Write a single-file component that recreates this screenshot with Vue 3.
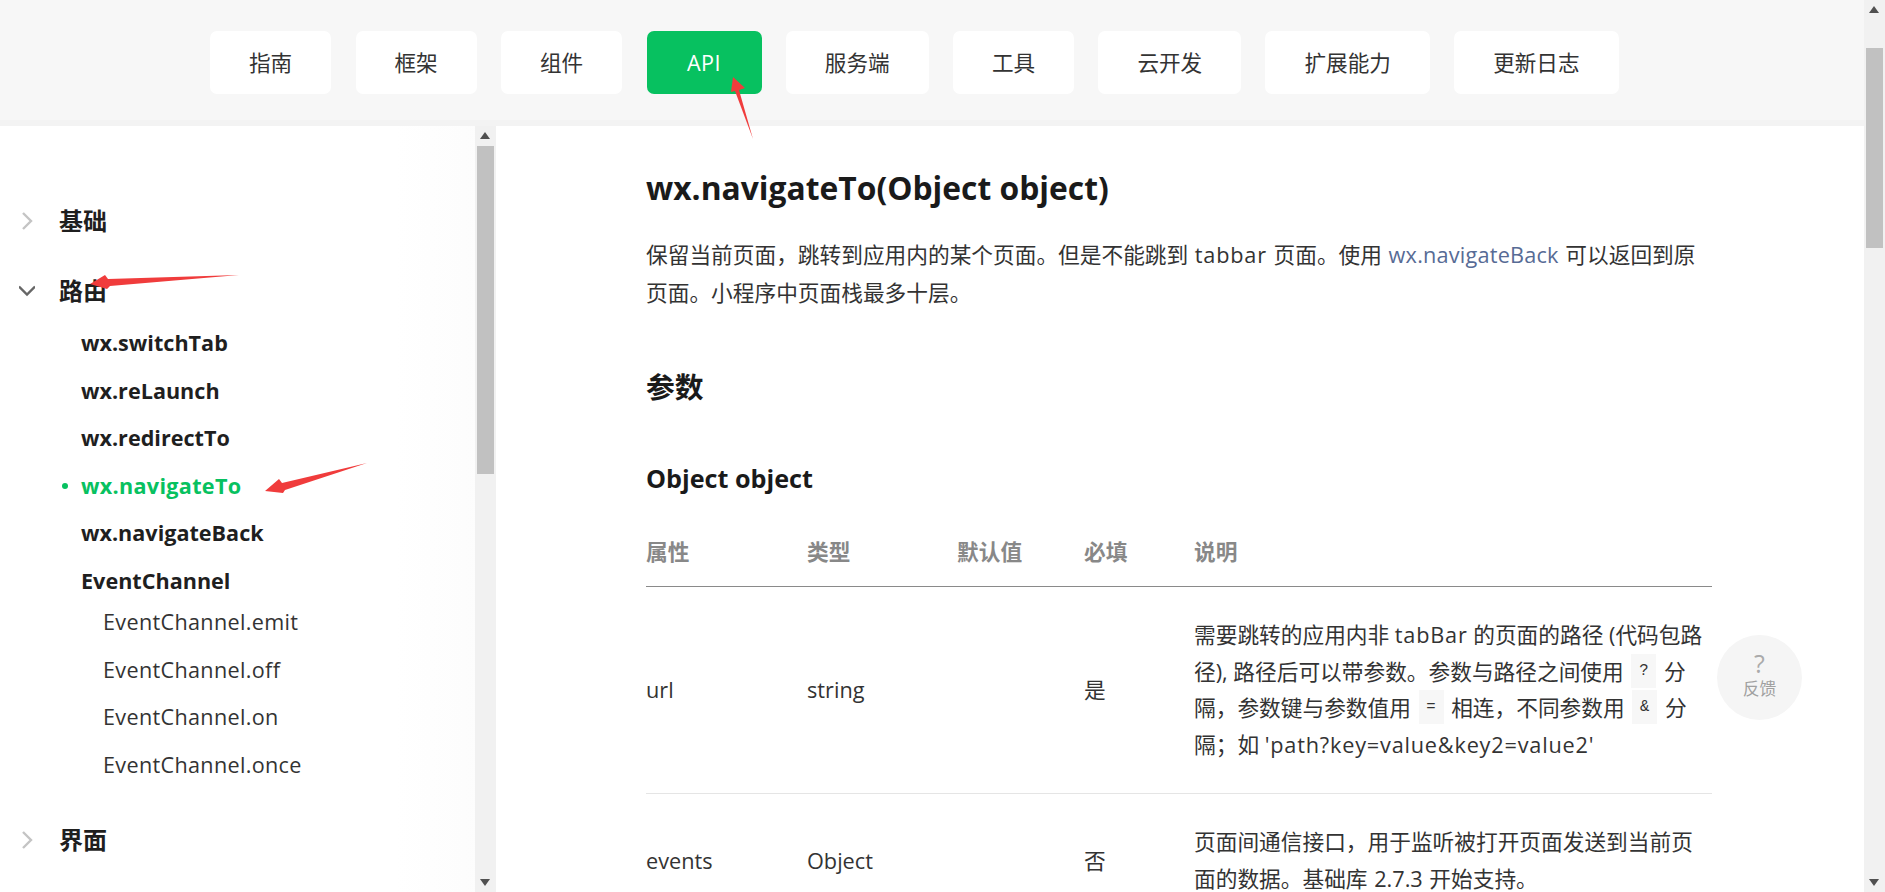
<script setup>
const tabs = [
  { label: '指南' }, { label: '框架' }, { label: '组件' }, { label: 'API', active: true },
  { label: '服务端' }, { label: '工具' }, { label: '云开发' }, { label: '扩展能力' }, { label: '更新日志' }
]
const routes = [
  { label: 'wx.switchTab' }, { label: 'wx.reLaunch' }, { label: 'wx.redirectTo' },
  { label: 'wx.navigateTo', active: true }, { label: 'wx.navigateBack' }, { label: 'EventChannel' }
]
const subs = ['EventChannel.emit', 'EventChannel.off', 'EventChannel.on', 'EventChannel.once']
const heads = ['属性', '类型', '默认值', '必填', '说明']
</script>

<template>
  <div class="page">
    <div class="main">
      <header class="topbar">
        <nav class="tabs">
          <a v-for="t in tabs" :key="t.label" class="tab" :class="{ on: t.active }">{{ t.label }}</a>
        </nav>
      </header>
      <div class="body">
        <aside class="side">
          <div class="side-inner">
            <div class="group">
              <svg class="chev" width="16" height="20" viewBox="0 0 16 20"><path d="M4 2l8 8-8 8" fill="none" stroke="#c4c4c4" stroke-width="2.4"/></svg>
              <span>基础</span>
            </div>
            <div class="group second">
              <svg class="chev" width="16" height="20" viewBox="0 0 16 20"><path d="M0 5.500l8 8 8-8" fill="none" stroke="#666" stroke-width="2.4"/></svg>
              <span>路由</span>
            </div>
            <ul class="routes">
              <li v-for="r in routes" :key="r.label" class="route" :class="{ on: r.active }">{{ r.label }}</li>
            </ul>
            <ul class="subs">
              <li v-for="s in subs" :key="s" class="sub">{{ s }}</li>
            </ul>
            <div class="group third">
              <svg class="chev" width="16" height="20" viewBox="0 0 16 20"><path d="M4 2l8 8-8 8" fill="none" stroke="#c4c4c4" stroke-width="2.4"/></svg>
              <span>界面</span>
            </div>
          </div>
          <div class="bar inner-bar">
            <i class="up"></i>
            <div class="thumb t1"></div>
            <i class="down"></i>
          </div>
        </aside>
        <main class="content">
          <h1>wx.navigateTo(Object object)</h1>
          <p class="intro">保留当前页面，跳转到应用内的某个页面。但是不能跳到 <span class="lat">tabbar</span> 页面。使用 <a>wx.navigateBack</a> 可以返回到原<br>页面。小程序中页面栈最多十层。</p>
          <h2>参数</h2>
          <h3>Object object</h3>
          <table>
            <thead>
              <tr><th v-for="h in heads" :key="h">{{ h }}</th></tr>
            </thead>
            <tbody>
              <tr class="r1">
                <td>url</td><td>string</td><td></td><td>是</td>
                <td>需要跳转的应用内非 <span class="lat">tabBar</span> 的页面的路径 (代码包路<br>径), 路径后可以带参数。参数与路径之间使用 <code>?</code> 分<br>隔，参数键与参数值用 <code>=</code> 相连，不同参数用 <code>&amp;</code> 分<br>隔；如 <span class="path">'path?key=value&amp;key2=value2'</span></td>
              </tr>
              <tr>
                <td>events</td><td>Object</td><td></td><td>否</td>
                <td>页面间通信接口，用于监听被打开页面发送到当前页<br><span class="wide">面的数据。基础库 2.7.3 开始支持。</span></td>
              </tr>
            </tbody>
          </table>
        </main>
      </div>
    </div>
    <div class="bar outer-bar">
      <i class="up"></i>
      <div class="thumb t2"></div>
      <i class="down"></i>
    </div>

    <div class="feedback">
      <span class="q">?</span>
      <span class="fb">反馈</span>
    </div>

    <svg class="marks" width="1885" height="892" viewBox="0 0 1885 892">
      <polygon points="733,77 745,88 739,90 753,139 735,91 731,92" fill="#f03c3c"/>
      <polygon points="90,284 105,275 108,279 239,275 110,286 107,289" fill="#f03c3c"/>
      <polygon points="265,491 279,479 282,483 367,463 285,490 283,493" fill="#f03c3c"/>
    </svg>
  </div>
</template>

<style>
html, body { margin: 0; overflow: hidden; background: #fff; }
</style>

<style scoped>
.page {
  position: relative;
  display: flex;
  width: 1885px;
  height: 892px;
  overflow: hidden;
  font-family: "Open Sans", "Noto Sans CJK SC", sans-serif;
  color: #1a1a1a;
  font-size: 21.7px;
}
.main { flex: 1; min-width: 0; display: flex; flex-direction: column; }
.topbar {
  height: 120px;
  flex: none;
  background: #f7f7f7;
  border-bottom: 6px solid #f3f3f3;
}
.tabs { display: flex; gap: 24.300px; padding: 31px 0 0 210px; }
.tab {
  height: 63px;
  line-height: 63px;
  padding: 0 39px;
  background: #fff;
  border-radius: 7px;
  color: #333;
  font-size: 21.6px;
}
.tab.on {
  width: 115px;
  box-sizing: border-box;
  padding: 0;
  text-align: center;
  background: #07c160;
  color: #fff;
  letter-spacing: 0.5px;
}
.body { flex: 1; min-height: 0; display: flex; }
.side { width: 496px; flex: none; display: flex; background: linear-gradient(90deg, #fff 80%, #fcfcfc 100%); }
.side-inner { flex: 1; min-width: 0; padding-top: 77px; }
.group {
  position: relative;
  padding-left: 59px;
  height: 36px;
  line-height: 36px;
  font-size: 24px;
  font-weight: 700;
  color: #1f1f1f;
}
.chev { position: absolute; left: 19px; top: 8px; }
.second { margin-top: 34px; }
.third { margin-top: 34px; }
.routes { list-style: none; margin: 10.400px 0 0; padding: 0 0 0 81px; }
.route {
  position: relative;
  height: 47.500px;
  line-height: 47.500px;
  font-weight: 700;
  font-size: 21.600px;
  color: #1f1f1f;
}
.route.on { color: #07c160; letter-spacing: 0.3px; }
.route.on::before {
  content: "";
  position: absolute;
  left: -19px;
  top: 21px;
  width: 6px;
  height: 6px;
  border-radius: 50%;
  background: #07c160;
}
.subs { list-style: none; margin: -6px 0 0; padding: 0 0 0 103px; }
.sub { height: 47.400px; line-height: 47.400px; font-size: 21.600px; color: #333; letter-spacing: 0.33px; }
.bar { position: relative; background: #f1f1f1; flex: none; }
.inner-bar { width: 21px; }
.outer-bar { width: 21px; }
.thumb { position: absolute; background: #c1c1c1; }
.t1 { left: 2px; right: 2px; top: 20px; height: 328px; }
.t2 { left: 2px; right: 2px; top: 48px; height: 200px; }
.up, .down {
  position: absolute;
  left: 5px;
  width: 0;
  height: 0;
  border-left: 5.500px solid transparent;
  border-right: 5.500px solid transparent;
}
.up { top: 6px; border-bottom: 7px solid #505050; }
.down { bottom: 6px; border-top: 7px solid #505050; }
.content { flex: 1; min-width: 0; padding: 37.400px 0 0 150px; background: #fff; overflow: hidden; }
h1 {
  margin: 0;
  width: 1066px;
  height: 50px;
  line-height: 50px;
  font-size: 31.800px;
  font-weight: 700;
  color: #1a1a1a;
}
.intro {
  margin: 23px 0 0;
  width: 1066px;
  line-height: 37.500px;
  white-space: nowrap;
  word-spacing: 1px;
  color: #333;
}
.intro a { color: #576b95; letter-spacing: 0.2px; }
.lat { letter-spacing: 0.8px; }
.wide { word-spacing: 1px; }
.path { letter-spacing: 0.8px; }
h2 {
  margin: 54px 0 0;
  height: 44px;
  line-height: 44px;
  font-size: 28.800px;
  font-weight: 700;
}
h3 {
  margin: 49px 0 0;
  height: 40px;
  line-height: 40px;
  font-size: 25.200px;
  font-weight: 700;
}
table {
  margin-top: 29px;
  width: 1066px;
  table-layout: fixed;
  border-collapse: collapse;
}
th:nth-child(1) { width: 161px; }
th:nth-child(2) { width: 150px; }
th:nth-child(3) { width: 127px; }
th:nth-child(4) { width: 110px; }
th {
  padding: 0;
  height: 47px;
  padding-bottom: 12px;
  text-align: left;
  color: #888;
  font-weight: 700;
  border-bottom: 1px solid #8a8a8a;
}
td {
  padding: 30px 0;
  line-height: 36.500px;
  white-space: nowrap;
  color: #333;
  border-bottom: 1px solid #e5e5e5;
}
code {
  display: inline-block;
  width: 25px;
  height: 34px;
  line-height: 34px;
  margin: 0 2px;
  text-align: center;
  vertical-align: top;
  background: #f7f7f7;
  font-family: "Liberation Mono", monospace;
  font-size: 15.600px;
}
.feedback {
  position: absolute;
  left: 1717px;
  top: 635px;
  width: 85px;
  height: 85px;
  border-radius: 50%;
  background: #f5f5f5;
  display: flex;
  flex-direction: column;
  align-items: center;
  color: #aaa;
}
.q { font-size: 25px; line-height: 28px; margin-top: 14px; }
.fb { font-size: 16.800px; line-height: 24px; color: #a0a0a0; }
.marks { position: absolute; left: 0; top: 0; pointer-events: none; }
</style>
